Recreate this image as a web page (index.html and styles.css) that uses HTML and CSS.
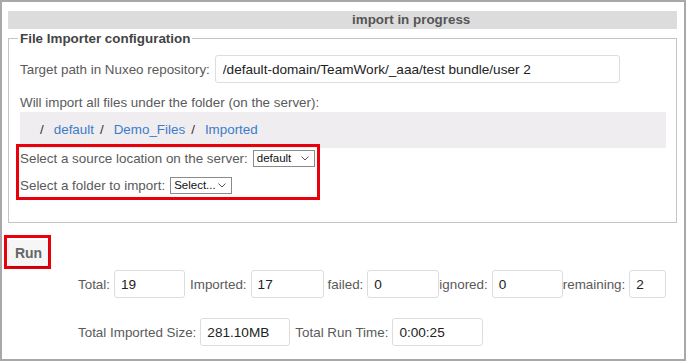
FILE: index.html
```html
<!DOCTYPE html>
<html lang="en">
<head>
    <meta charset="UTF-8">
    <title>File Importer</title>
    <link rel="stylesheet" href="styles.css">
</head>
<body>
    <div class="frame">
        <div class="status">import in progress</div>

        <fieldset class="config">
            <legend>File Importer configuration</legend>
            <div class="target">
                <label for="path">Target path in Nuxeo repository:</label>
                <input type="text" id="path" class="path" value="/default-domain/TeamWork/_aaa/test bundle/user 2">
            </div>
            <p class="note">Will import all files under the folder (on the server):</p>
            <div class="crumbs"><span class="sep">/</span><a href="#">default</a><span class="sep">/</span><a href="#">Demo_Files</a><span class="sep">/</span><a href="#">Imported</a></div>
            <div class="highlight">
                <div class="sel-row">
                    <span>Select a source location on the server:</span>
                    <span class="select">default
                        <svg width="8" height="5" viewBox="0 0 8 5"><path d="M0.5 0.5l3.5 3.5L7.5 0.5" fill="none" stroke="#555" stroke-width="1"/></svg>
                    </span>
                </div>
                <div class="sel-row">
                    <span>Select a folder to import:</span>
                    <span class="select">Select...
                        <svg width="8" height="5" viewBox="0 0 8 5"><path d="M0.5 0.5l3.5 3.5L7.5 0.5" fill="none" stroke="#555" stroke-width="1"/></svg>
                    </span>
                </div>
            </div>
        </fieldset>

        <div class="run-box">
            <button type="button">Run</button>
        </div>

        <div class="stats">
            <label>Total:</label>
            <input type="text" class="num w-total" value="19">
            <label>Imported:</label>
            <input type="text" class="num w-imported" value="17">
            <label>failed:</label>
            <input type="text" class="num w-failed" value="0">
            <label>ignored:</label>
            <input type="text" class="num w-ignored" value="0">
            <label>remaining:</label>
            <input type="text" class="num w-remaining" value="2">
        </div>
        <div class="stats second">
            <label>Total Imported Size:</label>
            <input type="text" class="num w-size" value="281.10MB">
            <label>Total Run Time:</label>
            <input type="text" class="num w-time" value="0:00:25">
        </div>
    </div>
</body>
</html>
```

FILE: styles.css
```css
body {
    margin: 0;
    font-family: 'Liberation Sans', Arial, sans-serif;
    font-size: 13.4px;
    color: #5a5a5a;
    background-color: #fff;
}

.frame {
    width: 686px;
    height: 361px;
    box-sizing: border-box;
    border: 2px solid #a8a8a8;
    padding: 9px 7px 0 6px;
    overflow: hidden;
}

.status {
    height: 18px;
    line-height: 18px;
    background-color: #dcdcdc;
    font-weight: bold;
    color: #555;
    padding-left: 344px;
}

.config {
    margin: 2px 0 0 0;
    padding: 0 10px 22px 11px;
    border: 1px solid #c4c4c4;
}

.config legend {
    font-weight: bold;
    color: #444;
    padding: 0 2px;
    margin-left: -2px;
}

.target {
    display: flex;
    align-items: center;
    margin-top: 9px;
}

.target label {
    margin-right: 5px;
}

.path {
    width: 405px;
    height: 28px;
    box-sizing: border-box;
    border: 1px solid #ddd;
    border-radius: 3px;
    padding: 0 7px;
    font-family: 'Liberation Sans', Arial, sans-serif;
    font-size: 13.6px;
    color: #222;
}

.note {
    margin: 11px 0 0 0;
    line-height: 17px;
}

.crumbs {
    margin-top: 1px;
    height: 36px;
    line-height: 36px;
    background-color: #efedf0;
    padding-left: 20px;
    white-space: nowrap;
}

.crumbs .sep {
    color: #333;
    margin-right: 10px;
}

.crumbs a {
    color: #3b7cc8;
    text-decoration: none;
    margin-right: 6px;
}

.highlight {
    width: 304px;
    box-sizing: border-box;
    margin: -4px 0 0 -4px;
    border: 3px solid #e8000b;
    padding: 1px 0 2px 1px;
}

.sel-row {
    display: flex;
    align-items: center;
    height: 20px;
    white-space: nowrap;
}

.sel-row + .sel-row {
    margin-top: 7px;
}

.select {
    display: inline-flex;
    align-items: center;
    justify-content: space-between;
    flex-shrink: 0;
    width: 62px;
    height: 17px;
    box-sizing: border-box;
    margin-left: 5px;
    padding: 0 5px 0 3px;
    border: 1px solid #8a8a8a;
    font-size: 11.5px;
    color: #111;
    background-color: #fff;
}

.run-box {
    width: 47px;
    height: 34px;
    box-sizing: border-box;
    margin: 12px 0 0 -4px;
    border: 3px solid #e8000b;
    padding: 2px;
}

.run-box button {
    display: block;
    width: 39px;
    height: 26px;
    border: none;
    border-radius: 2px;
    background-color: #f6f6f6;
    box-shadow: 0 1px 2px rgba(0, 0, 0, 0.25);
    font-family: 'Liberation Sans', Arial, sans-serif;
    font-size: 14px;
    font-weight: bold;
    color: #666;
    padding: 0;
}

.stats {
    display: flex;
    align-items: center;
    padding-left: 70px;
    white-space: nowrap;
}

.run-box + .stats {
    margin-top: 1px;
}

.stats.second {
    margin-top: 20px;
}

.stats label {
    margin-right: 4px;
}

.num {
    flex-shrink: 0;
    height: 28px;
    box-sizing: border-box;
    border: 1px solid #ddd;
    border-radius: 3px;
    padding: 0 6px;
    font-family: 'Liberation Sans', Arial, sans-serif;
    font-size: 13.6px;
    color: #222;
    margin-right: 5px;
}

.w-total { width: 71px; }
.w-imported { width: 73px; margin-right: 4px; }
.w-failed { width: 72px; margin-right: 0; }
.w-ignored { width: 71px; margin-right: 0; }
.w-remaining { width: 37px; }
.w-size { width: 90px; }
.w-time { width: 91px; }
```
